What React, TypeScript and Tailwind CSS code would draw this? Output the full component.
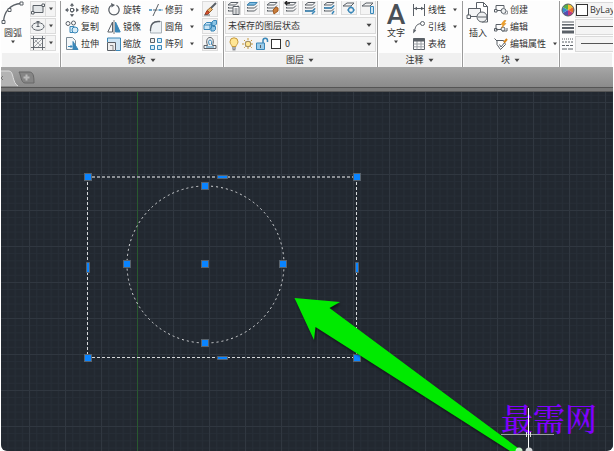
import type { ReactNode } from "react";

const INK = "#5a6067";
const BLUE = "#3a87b8";

interface iconProps {
  children: ReactNode;
  size?: "sm" | "lg";
}

const Icon = ({ children, size = "sm" }: iconProps) => (
  <svg
    viewBox={size === "lg" ? "0 0 24 24" : "0 0 14 14"}
    className={size === "lg" ? "size-6 shrink-0" : "size-3.5 shrink-0"}
    fill="none"
    stroke={INK}
    strokeWidth={1}
    aria-hidden="true"
  >
    {children}
  </svg>
);

const Caret = ({ large }: { large?: boolean }) => (
  <svg
    viewBox="0 0 6 4"
    className={large ? "h-[5px] w-2 shrink-0" : "h-1 w-1.5 shrink-0"}
    aria-hidden="true"
  >
    <path d="M1 0.6h4L3 3.2z" fill="#444" />
  </svg>
);

const icons = {
  move: (
    <Icon>
      <path d="M7 2v10M2 7h10" strokeDasharray="2 1" />
      <path d="M7 0 9.2 2.8H4.8zM7 14 4.8 11.2h4.4zM0 7l2.8-2.2v4.4zM14 7l-2.8 2.2V4.8z" fill={INK} stroke="none" />
      <path d="M5.5 5.5h3v3h-3z" fill="#fff" />
    </Icon>
  ),
  copy: (
    <Icon>
      <circle cx="3" cy="3.5" r="2" />
      <circle cx="8.5" cy="3" r="2" />
      <path d="M5 6.5h4l2 2v4H5z" fill="#d7ecf8" stroke={BLUE} />
      <circle cx="10" cy="10" r="3" fill="#d7ecf8" stroke={BLUE} />
    </Icon>
  ),
  stretch: (
    <Icon>
      <path d="M1.5 .5h6l3 3v9h-9z" fill="#f4f7f9" stroke="#7a8a96" />
      <path d="M8 4.5v8h5z" fill={BLUE} stroke={BLUE} />
      <path d="M3 9.5h4M5.5 8 7 9.5 5.5 11" stroke={BLUE} />
    </Icon>
  ),
  rotate: (
    <Icon>
      <path d="M9.5 2.2A5.2 5.2 0 1 1 4.5 2.2" strokeWidth="1.3" />
      <path d="M4 0l4 2-3.4 2.6z" fill={INK} stroke="none" />
    </Icon>
  ),
  mirror: (
    <Icon>
      <path d="M5.5 2v10H.8z" fill="#fff" />
      <path d="M8.5 2v10h4.7z" fill={BLUE} stroke={BLUE} />
      <path d="M7 0v14" stroke="#777" />
    </Icon>
  ),
  scale: (
    <Icon>
      <path d="M.5 5V1h13v12.5H9" fill="#cfe6f5" stroke={BLUE} />
      <path d="M.5 5.5h8v8h-8z" fill="#eee" />
      <path d="M3 8.5h3v5" stroke="#888" />
    </Icon>
  ),
  trim: (
    <Icon>
      <path d="M0 7h4.5M9.5 7H14" stroke={BLUE} strokeWidth="1.3" strokeDasharray="3 1" />
      <path d="M4 13 9.5 1M4.5 7h4" />
    </Icon>
  ),
  fillet: (
    <Icon>
      <path d="M1.5 13V9Q2 1.5 9 1.5h3.5V13z" fill="#eef2f5" stroke="#a7b0b7" />
      <path d="M1.5 11V9Q2 1.5 9 1.5h2" strokeWidth="1.3" />
    </Icon>
  ),
  array: (
    <Icon>
      <path d="M1.5 1.5h4v4h-4z" fill="#eee" />
      <path d="M8.5 1.5h4v4h-4zM1.5 8.5h4v4h-4zM8.5 8.5h4v4h-4z" fill="#d7ecf8" stroke={BLUE} />
    </Icon>
  ),
  erase: (
    <Icon>
      <path d="m13 1-6 6" strokeWidth="2" />
      <path d="m7.5 5.5 2 2-3 3-2.5-2z" fill="#e9b46d" stroke="#9b6a35" />
      <path d="m4 8.5 2.5 2-2 2H2z" fill="#d3502c" stroke="#a33b1e" />
      <path d="M1 13h6" />
    </Icon>
  ),
  explode: (
    <Icon>
      <path d="m1 6 2.5-2.5h5V8L7 10.5H1zM1 6h6v4.5M7 6l1.5-2.5" fill="#c8e4f5" stroke={BLUE} />
      <path d="m9 3 1.5-1.5h3V5L12 6.5H9zM8 9l1.500-1.500h3v3L11 12H8z" fill="#8cc4e5" stroke={BLUE} />
    </Icon>
  ),
  offset: (
    <Icon>
      <path d="M1 12.5v-3h3.5C2.5 4 4.5 1.5 7 1.5S11.5 4 9.5 9.5H13v3z" />
      <path d="M3 11h8M6.5 9C5 6 5.5 4 7 4s2.5 2 1 5" stroke={BLUE} />
    </Icon>
  ),
  rectangle: (
    <Icon>
      <path d="M2 3.5h10v7H2z" fill="#e3e6e8" />
      <path d="M11 2h2.5v2.5H11zM.5 9.5H3V12H.5z" fill="#fff" />
    </Icon>
  ),
  ellipse: (
    <Icon>
      <ellipse cx="7" cy="7.5" rx="6" ry="3.8" fill="#eef0f1" />
      <path d="M7 7.5V2M5.5 2.5h3M5.5 7.5h3" />
    </Icon>
  ),
  hatch: (
    <Icon>
      <path d="M2.5 0v14M11.5 0v14M0 2.5h14M0 11.5h14" strokeWidth=".9" />
      <path d="m3 7 4-4M3 11l8-8M7 11l4-4M4 4l6 6" stroke="#a5a9ad" />
    </Icon>
  ),
  linear: (
    <Icon>
      <path d="M1.5 1v12M12.5 1v12M2 5.5h10" />
      <path d="m2 5.5 3-1.7v3.4zM12 5.5 9 3.8v3.4z" fill={INK} stroke="none" />
    </Icon>
  ),
  leader: (
    <Icon>
      <path d="M2.5 11C3.5 6 4.5 4.5 8.5 3.5" />
      <circle cx="10.5" cy="3.5" r="2" />
      <path d="M1 13.5 1.5 9l2.7 1.5z" fill={INK} stroke="none" />
    </Icon>
  ),
  table: (
    <Icon>
      <path d="M1.5 1.5h11v11h-11z" />
      <path d="M1.5 7h11M1.5 9.8h11M5 4v8.5M9 4v8.5" stroke="#9a9fa4" />
      <path d="M1.5 2h11v2h-11z" fill={INK} />
    </Icon>
  ),
  create: (
    <Icon>
      <path d="M8 7.5H2v-5h8V5" />
      <path d="M.5 6.5H3V9H.5z" fill="#fff" />
      <circle cx="9.5" cy="8" r="2.5" fill="#eef0f1" />
      <path d="M11 8h2.5v3H9" stroke="#9a9fa4" />
    </Icon>
  ),
  edit: (
    <Icon>
      <path d="M7 9.5H2v-5h5M.5 8.5H3V11H.5zM8 11h5V8" />
      <circle cx="9" cy="9" r="2" fill="#eef0f1" />
      <path d="m10 .5-3 4h2L7.5 8 12 3.5h-2L12 .5z" fill="#f0a229" stroke="#d9861b" strokeWidth=".5" />
    </Icon>
  ),
  attribute: (
    <Icon>
      <path d="M.5 1.5 3 4M3 3.500h6.500l2 4-5 5-3.500-5z" fill="#fff" />
      <path d="m5.5 7.5 1.5 2.5L11 5" />
      <path d="m10 5.5 3-3.5" stroke="#d9861b" strokeWidth="2" />
    </Icon>
  ),
};

const layerSheets = (
  <path d="m2 4 3-2.500h7L9.500 4zM2 7l1-1M2 10l1-1M2 7h7.500L12 4.500M2 10h7.500L12 7.500" />
);

const layerTools = [
  {
    label: "图层特性",
    art: <path d="M7 5.5h6v8H7zM8.5 8h3M8.5 10h3M8.5 12h3" fill="#fff" />,
  },
  {
    label: "置为当前图层",
    art: <path d="m2 4 3-2.500h7L9.500 4z" fill="#85bfe2" stroke={BLUE} />,
  },
  {
    label: "匹配图层",
    art: <path d="m11 6-3 3 1 4 4-3V7z" fill="#c77c3a" stroke="#a45b20" />,
  },
  {
    label: "上一个图层",
    art: <path d="M6 2H1M3 0 1 2l2 2" strokeWidth="1.3" stroke="#222" />,
  },
  {
    label: "图层隔离",
    art: <path d="M2 10h7.5L12 7.5M9 13l3-3" stroke={BLUE} strokeWidth="1.5" />,
  },
  {
    label: "取消图层隔离",
    art: <path d="M2 7h7.5L12 4.5M10 13l2-3" stroke={BLUE} strokeWidth="1.5" />,
  },
];

const modifyColumns = [
  [
    { label: "移动", icon: icons.move },
    { label: "复制", icon: icons.copy },
    { label: "拉伸", icon: icons.stretch },
  ],
  [
    { label: "旋转", icon: icons.rotate },
    { label: "镜像", icon: icons.mirror },
    { label: "缩放", icon: icons.scale },
  ],
  [
    { label: "修剪", icon: icons.trim, menu: true },
    { label: "圆角", icon: icons.fillet, menu: true },
    { label: "阵列", icon: icons.array, menu: true },
  ],
];

const annotateTools = [
  { label: "线性", icon: icons.linear, menu: true },
  { label: "引线", icon: icons.leader, menu: true },
  { label: "表格", icon: icons.table },
];

const blockTools = [
  { label: "创建", icon: icons.create },
  { label: "编辑", icon: icons.edit },
  { label: "编辑属性", icon: icons.attribute, menu: true },
];

interface toolProps {
  label: string;
  icon: ReactNode;
  menu?: boolean;
}

const Tool = ({ label, icon, menu }: toolProps) => (
  <button className="flex h-[17px] items-center gap-[2px] whitespace-nowrap">
    {icon}
    <span>{label}</span>
    {menu && (
      <span className="ml-1">
        <Caret />
      </span>
    )}
  </button>
);

const ToolColumn = ({ tools }: { tools: toolProps[] }) => (
  <div className="flex flex-col">
    {tools.map((tool) => (
      <Tool key={tool.label} {...tool} />
    ))}
  </div>
);

const BigTool = ({ label, icon, menu }: toolProps) => (
  <button className="flex flex-col items-center">
    {icon}
    <span className="mt-[2px] leading-3">{label}</span>
    {menu && (
      <span className="mt-px flex">
        <Caret />
      </span>
    )}
  </button>
);

interface panelProps {
  title?: string;
  className: string;
  children: ReactNode;
}

const Panel = ({ title, className, children }: panelProps) => (
  <section className={`flex flex-col border-[#9b9b9b] ${className}`}>
    <div className="flex h-[52px] items-start">{children}</div>
    <div className="mx-px flex h-3.5 items-center justify-center bg-[#f0f0f0]">
      {title && (
        <button className="flex items-center gap-[3px]">
          {title}
          <Caret large />
        </button>
      )}
    </div>
  </section>
);

const Ribbon = () => (
  <header className="flex bg-[#fdfdfd]">
    <Panel className="w-[60px] shrink-0 border-r">
      <BigTool
        label="圆弧"
        menu
        icon={
          <Icon size="lg">
            <path d="M2.5 21C3 11 9 3 20 2.5" strokeWidth="1.3" />
            <path d="M1 19.5h3v3H1zM7 7.5h3v3H7zM19 1h3v3h-3z" fill="#fff" />
          </Icon>
        }
      />
      <div className="ml-[5px] flex flex-col">
        {[
          { label: "矩形", icon: icons.rectangle },
          { label: "椭圆", icon: icons.ellipse },
          { label: "图案填充", icon: icons.hatch },
        ].map((item) => (
          <div key={item.label} className="flex h-[17px] pb-px">
            <button aria-label={item.label} className="flex w-4 items-center justify-center border border-[#dcdcdc] bg-[#f4f4f4]">
              {item.icon}
            </button>
            <button aria-label={`${item.label}菜单`} className="flex w-2.5 items-center justify-center border border-l-0 border-[#dcdcdc] bg-[#f4f4f4]">
              <Caret />
            </button>
          </div>
        ))}
      </div>
    </Panel>

    <Panel title="修改" className="w-[163px] shrink-0 border-r">
      <div className="flex gap-2 pl-1">
        {modifyColumns.map((tools) => (
          <ToolColumn key={tools[0].label} tools={tools} />
        ))}
      </div>
      <div className="ml-[7px] flex flex-col">
        {[
          { label: "删除", icon: icons.erase },
          { label: "分解", icon: icons.explode },
          { label: "偏移", icon: icons.offset },
        ].map((item) => (
          <div key={item.label} className="flex h-[17px] pb-px">
            <button aria-label={item.label} className="flex w-4 items-center justify-center border border-[#dcdcdc] bg-[#f4f4f4]">
              {item.icon}
            </button>
          </div>
        ))}
      </div>
    </Panel>

    <Panel title="图层" className="w-[154px] shrink-0 border-r">
      <div className="flex min-w-0 flex-1 flex-col gap-[2px] px-px">
        <div className="flex h-3.5 justify-between">
          {layerTools.map((tool) => (
            <button key={tool.label} aria-label={tool.label} className="flex w-4 items-center justify-center border border-t-0 border-[#dcdcdc] bg-[#f4f4f4]">
              <Icon>
                {layerSheets}
                {tool.art}
              </Icon>
            </button>
          ))}
          <button aria-label="冻结图层" className="flex w-4 items-center justify-center border border-t-0 border-[#dcdcdc] bg-[#f4f4f4]">
            <Icon>
              <path d="m1 5 4-3h7L9 5z" />
              <circle cx="9" cy="9" r="2.5" stroke={BLUE} strokeWidth="1.3" />
              <path d="M9 5v8M5 9h8" stroke={BLUE} strokeDasharray="1.5 5" />
            </Icon>
          </button>
          <button aria-label="锁定图层" className="flex w-4 items-center justify-center border border-t-0 border-[#dcdcdc] bg-[#f4f4f4]">
            <Icon>
              <path d="m1 5 4-3h7L9 5z" />
              <path d="M9.5 5.5h3v7h-3z" fill="#cfe6f5" stroke={BLUE} />
            </Icon>
          </button>
        </div>
        <div className="relative flex h-[17px] items-center border border-[#dadada] bg-[#f4f4f4]">
          <select aria-label="图层状态" className="w-full appearance-none pl-[2px] outline-none">
            <option>未保存的图层状态</option>
          </select>
          <span className="pointer-events-none absolute right-[2px]">
            <Caret large />
          </span>
        </div>
        <div className="relative flex h-4 items-center border border-[#dadada] bg-[#f4f4f4] pl-px">
          <Icon>
            <path d="M5 9.5C5 8 3 7 3 4.8a4 4 0 0 1 8 0C11 7 9 8 9 9.5z" fill="#ffe694" stroke="#c79a3d" />
            <path d="M5 11h4M5.5 12.8h3" />
          </Icon>
          <Icon>
            <path d="M7 1v12M1 7h12M3 3l8 8M11 3 3 11" stroke="#c79a3d" strokeDasharray="2 1" />
            <circle cx="7" cy="7" r="2.8" fill="#ffe694" stroke="#9a8458" />
          </Icon>
          <Icon>
            <path d="M8 6V3.5C8 .5 12.5.5 12.5 3.5V5" stroke={BLUE} strokeWidth="1.5" />
            <path d="M1.5 6h8v6.5h-8z" fill="#9bcbe8" stroke={BLUE} />
            <path d="M5.5 8v3" />
          </Icon>
          <span className="ml-[2px] size-2.5 shrink-0 border border-[#333] bg-white" />
          <select aria-label="当前图层" className="w-full appearance-none pl-1 outline-none">
            <option>0</option>
          </select>
          <span className="pointer-events-none absolute right-[2px]">
            <Caret large />
          </span>
        </div>
      </div>
    </Panel>

    <Panel title="注释" className="w-[85px] shrink-0 border-r">
      <div className="ml-1.5 mr-1">
        <BigTool
          label="文字"
          menu
          icon={
            <span className="h-6 w-6 text-center font-[Roboto,sans-serif] text-[28px] leading-7 font-medium text-[#4a5056]">
              A
            </span>
          }
        />
      </div>
      <ToolColumn tools={annotateTools} />
    </Panel>

    <Panel title="块" className="w-[97px] shrink-0 border-r">
      <div className="ml-[3px] mr-1">
        <BigTool
          label="插入"
          icon={
            <Icon size="lg">
              <path d="M10.5 15V1.5h7l4 4V21H16" fill="#fff" />
              <path d="M17.5 1.5v4h4" />
              <path d="M2.5 7.5h12v8h-12z" fill="#f4f5f6" />
              <path d="M1 14h3.5v3.5H1z" fill="#fff" />
              <circle cx="16" cy="16" r="5" fill="#eef0f1" />
              <path d="M12 16h9" />
            </Icon>
          }
        />
      </div>
      <ToolColumn tools={blockTools} />
    </Panel>

    <Panel className="min-w-0 flex-1">
      <div className="flex w-full flex-col pl-px">
        <div className="flex h-[17px] items-center">
          <Icon>
            <g stroke="none">
              <path d="M7 7V1a6 6 0 0 1 5.2 3z" fill="#f2c230" />
              <path d="M7 7 12.2 4a6 6 0 0 1 0 6z" fill="#e5702c" />
              <path d="m7 7 5.2 3A6 6 0 0 1 7 13z" fill="#c23a7c" />
              <path d="M7 7v6a6 6 0 0 1-5.2-3z" fill="#544fb0" />
              <path d="m7 7-5.2 3a6 6 0 0 1 0-6z" fill="#3590cc" />
              <path d="M7 7 1.8 4A6 6 0 0 1 7 1z" fill="#58ac49" />
            </g>
            <circle cx="7" cy="7" r="6" />
          </Icon>
          <div className="flex h-4 min-w-0 flex-1 items-center gap-[2px] border border-r-0 border-[#dadada] bg-[#f4f4f4]">
            <span className="size-3 shrink-0 border border-[#333] bg-white" />
            <select aria-label="对象颜色" className="min-w-0 flex-1 appearance-none overflow-hidden font-['Open_Sans',sans-serif] text-[9px] outline-none">
              <option>ByLay</option>
            </select>
          </div>
        </div>
        <div className="flex h-[17px] items-center">
          <Icon>
            <path d="M1 2h12" />
            <path d="M1 4.8h12" strokeWidth="1.5" />
            <path d="M1 8h12" strokeWidth="2" />
            <path d="M1 12h12" strokeWidth="3" />
          </Icon>
          <button aria-label="线宽" className="flex h-4 flex-1 items-center border border-r-0 border-[#dadada] bg-[#f4f4f4] pl-[2px]">
            <span className="h-px w-full bg-[#555]" />
          </button>
        </div>
        <div className="flex h-[17px] items-center">
          <Icon>
            <path d="M1 2h12" strokeDasharray="1 1" />
            <path d="M1 5h12" strokeDasharray="2 1" />
            <path d="M1 8.5h12" strokeDasharray="3 1" />
            <path d="M1 12h12" strokeDasharray="5 1" />
          </Icon>
          <button aria-label="线型" className="flex h-4 flex-1 items-center border border-r-0 border-[#dadada] bg-[#f4f4f4] pl-[5px]">
            <span className="h-px w-full bg-[#555]" />
          </button>
        </div>
      </div>
    </Panel>
  </header>
);

const FileTabs = () => (
  <nav className="flex h-5 items-end bg-linear-to-b from-[#a6a6a6] to-[#8b8b8b]">
    <button aria-label="关闭图形">
      <svg viewBox="0 0 17 17" className="h-[17px] w-[17px]" aria-hidden="true">
        <path d="M0 1h8c5 0 3 12 9 15H0z" fill="#b4b4b4" />
        <path d="M0 1h8c5 0 3 12 9 15" fill="none" stroke="#dedede" />
        <path d="m-2 6 4 4M2 6l-4 4" stroke="#777" />
      </svg>
    </button>
    <button aria-label="新图形" className="mb-[3px]">
      <svg viewBox="0 0 17 13" className="h-[13px] w-[17px]" aria-hidden="true">
        <path d="M1 1h10c4 0 5 3 5 11H7C3 12 3 4 1 1z" fill="#858585" stroke="#686868" />
        <path d="M8.5 3.5v6M5.5 6.5h6" stroke="#bbb" strokeWidth="2" />
      </svg>
    </button>
  </nav>
);

const grips = [
  [88, 177],
  [357, 177],
  [88, 358],
  [357, 358],
  [205, 186],
  [127, 264],
  [205, 264],
  [283, 264],
  [205, 343],
];

const Drawing = () => (
  <main className="relative min-h-0 flex-1 overflow-hidden rounded-b-md bg-[#222830]">
    <svg className="absolute inset-0 size-full" role="img" aria-label="矩形和圆">
      <defs>
        <pattern id="minor" x="28" y="10" width="7.2" height="7.2" patternUnits="userSpaceOnUse">
          <path d="M.5 0v7.2M0 .5h7.2" stroke="#272e37" />
        </pattern>
        <pattern id="major" x="28" y="10" width="36" height="36" patternUnits="userSpaceOnUse">
          <path d="M.5 0v36M0 .5h36" stroke="#303740" />
        </pattern>
      </defs>
      <rect width="100%" height="100%" fill="url(#minor)" />
      <rect width="100%" height="100%" fill="url(#major)" />
      <g transform="translate(-1 -92)">
        <path d="M137.5 92V1200" stroke="#28582f" />
        <g fill="none" stroke="#d6d8da" strokeDasharray="3 2">
          <path d="M87 177H356" stroke="#8c9095" strokeWidth="2" />
          <path d="M87 357.5H356M87.5 177V357M356.5 177V357" />
          <circle cx="205.5" cy="264.5" r="78.5" strokeDasharray="2 3" />
        </g>
        <g fill="#0a84ff" stroke="#59636d">
          {grips.map(([x, y]) => (
            <rect key={`${x}-${y}`} x={x - 3.5} y={y - 3.5} width="7" height="7" />
          ))}
          <path d="M217.5 175.5h10v3h-10zM217.5 356.5h10v3h-10zM86.5 262.5h3v10h-3zM355.5 262.5h3v10h-3z" />
        </g>
        <path
          d="M294.5 298 340 302 329.5 308 522 451 510 451 315.5 327 314 340z"
          fill="#00ea00"
          className="drop-shadow-[1px_2px_1px_rgba(0,0,0,0.5)]"
        />
      </g>
    </svg>
    <p className="absolute right-4 bottom-2.5 font-['Noto_Serif_CJK_SC','Noto_Sans_CJK_SC',serif] text-[32px] leading-[48px] font-medium text-[#8000ff]">
      最需网
    </p>
    <svg viewBox="0 0 54 44" className="absolute right-[58px] bottom-0 h-11 w-[54px]" aria-hidden="true">
      <path d="M0 27.5h53" stroke="#9a9da1" />
      <path d="M27.5 1v43" stroke="#fff" />
      <path d="M25.5 25v5M29.5 25v5" stroke="#ddd" />
      <circle cx="18" cy="44" r="3.5" fill="#c5e8c5" />
      <circle cx="28" cy="44" r="3.5" fill="#d5d7d9" />
    </svg>
  </main>
);

const App = () => {
  return (
    <div className="flex h-screen flex-col bg-white px-px pt-px font-['Noto_Sans_CJK_SC',sans-serif] text-[9px] leading-3 text-[#333]">
      <Ribbon />
      <FileTabs />
      <div className="h-[5px] border-y border-[#555] bg-[#777]" />
      <Drawing />
    </div>
  );
};

export default App;
